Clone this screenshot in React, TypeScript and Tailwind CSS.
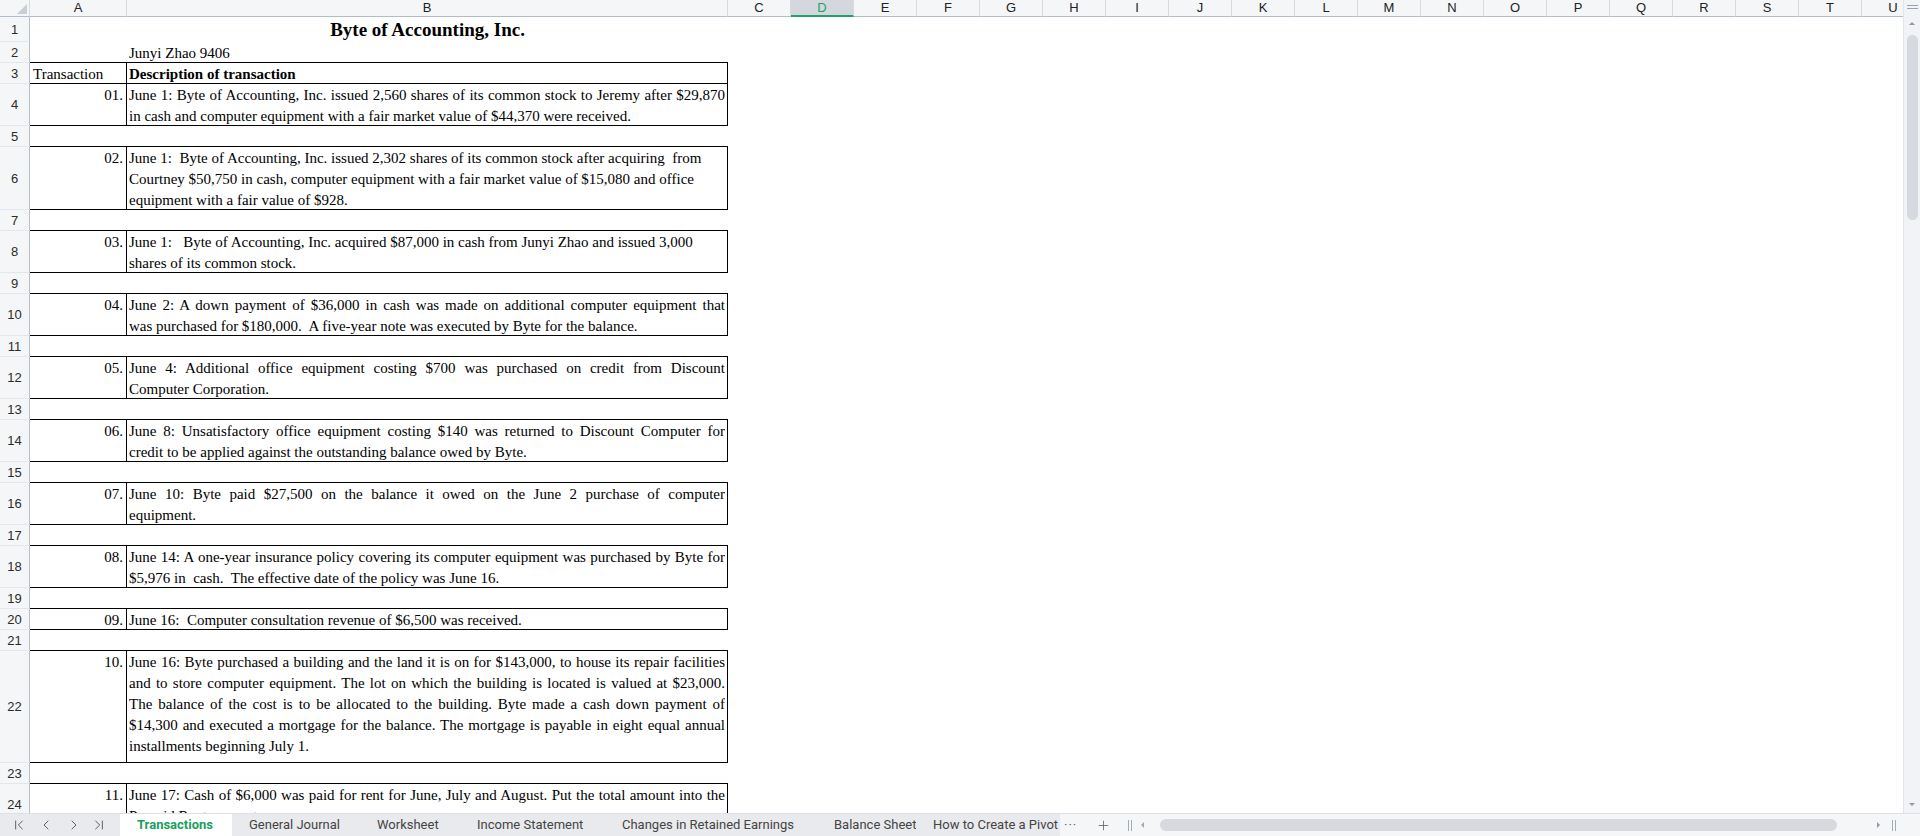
import { ChevronFirst, ChevronLeft, ChevronRight, ChevronLast, Plus } from 'lucide-react'

type DataRow = {
  n: number
  h: string
  num?: string
  lines?: string[]
  justify?: boolean
}

const COLS = ['C', 'D', 'E', 'F', 'G', 'H', 'I', 'J', 'K', 'L', 'M', 'N', 'O', 'P', 'Q', 'R', 'S', 'T', 'U']

const rows: DataRow[] = [
  {
    n: 4,
    h: 'h-[42px]',
    num: '01.',
    justify: true,
    lines: [
      'June 1:  Byte of Accounting, Inc. issued 2,560 shares of its common stock to Jeremy after $29,870',
      'in cash and computer equipment with a fair market value of $44,370 were received.',
    ],
  },
  { n: 5, h: 'h-[21px]' },
  {
    n: 6,
    h: 'h-[63px]',
    num: '02.',
    lines: [
      'June 1:  Byte of Accounting, Inc. issued 2,302 shares of its common stock after acquiring  from',
      'Courtney $50,750 in cash, computer equipment with a fair market value of $15,080 and office',
      'equipment with a fair value of $928.',
    ],
  },
  { n: 7, h: 'h-[21px]' },
  {
    n: 8,
    h: 'h-[42px]',
    num: '03.',
    lines: [
      'June 1:   Byte of Accounting, Inc. acquired $87,000 in cash from Junyi Zhao and issued 3,000',
      'shares of its common stock.',
    ],
  },
  { n: 9, h: 'h-[21px]' },
  {
    n: 10,
    h: 'h-[42px]',
    num: '04.',
    justify: true,
    lines: [
      'June 2:  A down payment of $36,000 in cash was made on additional computer equipment that',
      'was purchased for $180,000.  A five-year note was executed by Byte for the balance.',
    ],
  },
  { n: 11, h: 'h-[21px]' },
  {
    n: 12,
    h: 'h-[42px]',
    num: '05.',
    justify: true,
    lines: [
      'June 4:  Additional office equipment costing $700 was purchased on credit from Discount',
      'Computer Corporation.',
    ],
  },
  { n: 13, h: 'h-[21px]' },
  {
    n: 14,
    h: 'h-[42px]',
    num: '06.',
    justify: true,
    lines: [
      'June 8:  Unsatisfactory office equipment costing $140  was returned to Discount Computer for',
      'credit to be applied against the outstanding balance owed by Byte.',
    ],
  },
  { n: 15, h: 'h-[21px]' },
  {
    n: 16,
    h: 'h-[42px]',
    num: '07.',
    justify: true,
    lines: [
      'June 10:  Byte paid $27,500 on the balance it owed on the June 2 purchase of computer',
      'equipment.',
    ],
  },
  { n: 17, h: 'h-[21px]' },
  {
    n: 18,
    h: 'h-[42px]',
    num: '08.',
    justify: true,
    lines: [
      'June 14: A one-year insurance policy covering its computer equipment was purchased by Byte for',
      '$5,976 in  cash.  The effective date of the policy was June 16.',
    ],
  },
  { n: 19, h: 'h-[21px]' },
  {
    n: 20,
    h: 'h-[21px]',
    num: '09.',
    lines: ['June 16:  Computer consultation revenue of $6,500 was received.'],
  },
  { n: 21, h: 'h-[21px]' },
  {
    n: 22,
    h: 'h-[112px]',
    num: '10.',
    justify: true,
    lines: [
      'June 16:  Byte purchased a building and the land it is on for $143,000, to house its repair facilities',
      'and to store computer equipment.  The lot on which the building is located is valued at $23,000.',
      'The balance of the cost is to be allocated to the building.  Byte made a cash down payment of',
      '$14,300  and executed a mortgage for the balance.  The mortgage is payable in eight equal annual',
      'installments beginning July 1.',
    ],
  },
  { n: 23, h: 'h-[21px]' },
  {
    n: 24,
    h: 'h-[42px]',
    num: '11.',
    justify: true,
    lines: [
      'June 17:  Cash of $6,000 was paid for rent for June, July and August.  Put the total amount into the',
      'Prepaid Rent account.',
    ],
  },
]

const tabs = [
  { label: 'Transactions', w: 'w-[112px]', active: true },
  { label: 'General Journal', w: 'w-[128px]' },
  { label: 'Worksheet', w: 'w-[100px]' },
  { label: 'Income Statement', w: 'w-[145px]' },
  { label: 'Changes in Retained Earnings', w: 'w-[212px]' },
  { label: 'Balance Sheet', w: 'w-[99px]' },
  { label: 'How to Create a Pivot', w: 'w-[143px]' },
]

function RowNum({ n, h }: { n: number | string; h: string }) {
  return (
    <div
      className={`${h} flex w-[30px] shrink-0 items-center justify-center border-r border-b border-r-[#b7bfcc] border-b-[#e3e6eb] bg-[#f5f6f8] font-['Liberation_Sans',Arial,sans-serif] text-[13px] text-[#2b2b2b]`}
    >
      {n}
    </div>
  )
}

function ColumnHeader() {
  return (
    <div className="flex h-[17px] text-[13px] leading-[16px] text-[#222]">
      <div className="relative w-[30px] shrink-0 border-r border-b border-r-[#d6dae1] border-b-[#b3bccb] bg-[#f5f6f8]">
        <svg className="absolute right-[2px] bottom-[2px]" width="10" height="10" viewBox="0 0 10 10">
          <path d="M10 0 L10 10 L0 10 Z" fill="#c9ced6" />
        </svg>
      </div>
      <div className="w-[97px] shrink-0 border-r border-b border-r-[#d6dae1] border-b-[#b3bccb] bg-[#f5f6f8] text-center">A</div>
      <div className="w-[601px] shrink-0 border-r border-b border-r-[#d6dae1] border-b-[#b3bccb] bg-[#f5f6f8] text-center">B</div>
      {COLS.map((c) =>
        c === 'D' ? (
          <div
            key={c}
            className="w-[63px] shrink-0 border-r border-b-2 border-r-[#d6dae1] border-b-[#21a366] bg-[#d4d7dd] text-center text-[#21a366]"
          >
            {c}
          </div>
        ) : (
          <div
            key={c}
            className="w-[63px] shrink-0 border-r border-b border-r-[#d6dae1] border-b-[#b3bccb] bg-[#f5f6f8] text-center"
          >
            {c}
          </div>
        ),
      )}
    </div>
  )
}

function Line({ text, justify }: { text: string; justify: boolean }) {
  if (justify) {
    return <div className="h-[21px] overflow-hidden text-justify [text-align-last:justify]">{text}</div>
  }
  return <div className="h-[21px] overflow-hidden whitespace-pre">{text}</div>
}

function SheetRow({ row }: { row: DataRow }) {
  const boxed = !!row.lines
  return (
    <div className="flex">
      <RowNum n={row.n} h={row.h} />
      <div
        className={`${row.h} w-[97px] shrink-0 border-b border-black pt-[1px] pr-[3px] text-right ${boxed ? 'border-r' : ''}`}
      >
        {row.num}
      </div>
      <div className={`${row.h} w-[601px] shrink-0 border-b border-black px-[2px] pt-[1px] ${boxed ? 'border-r' : ''}`}>
        {row.lines?.map((l, i) => (
          <Line key={i} text={l} justify={!!row.justify && i < row.lines!.length - 1} />
        ))}
      </div>
      <div className="flex-1" />
    </div>
  )
}

function VScroll() {
  return (
    <div className="flex w-[17px] shrink-0 flex-col items-center border-l border-[#e2e5ea] bg-[#f2f3f6]">
      <div className="mt-[5px] flex w-[11px] flex-col gap-[2px]">
        <div className="h-[1px] bg-[#98a1b1]" />
        <div className="h-[1px] bg-[#98a1b1]" />
      </div>
      <div className="mt-[13px] h-0 w-0 border-x-[3px] border-b-[3px] border-x-transparent border-b-[#8e98aa]" />
      <div className="mt-[10px] h-[185px] w-[11px] rounded-full bg-[#d6d9df]" />
      <div className="flex-1" />
      <div className="mb-[7px] h-0 w-0 border-x-[3px] border-t-[3px] border-x-transparent border-t-[#8e98aa]" />
    </div>
  )
}

function BottomBar() {
  return (
    <div className="flex h-[23px] shrink-0 border-t border-[#dde0e6] bg-[#f5f6f8] font-['Roboto','Liberation_Sans',sans-serif] text-[13px] text-[#444]">
      <div className="flex w-[1060px] shrink-0 bg-[#e9eaee]">
        <div className="flex w-[120px] shrink-0 items-center pl-[11px] text-[#4a4a4a]">
          <ChevronFirst size={16} strokeWidth={1.3} />
          <ChevronLeft size={16} strokeWidth={1.3} className="ml-[11px]" />
          <ChevronRight size={16} strokeWidth={1.3} className="ml-[12px]" />
          <ChevronLast size={16} strokeWidth={1.3} className="ml-[9px]" />
        </div>
        <div className="flex flex-1 overflow-hidden">
          {tabs.map((t) => (
            <div
              key={t.label}
              className={`${t.w} flex shrink-0 items-center overflow-hidden pl-[17px] whitespace-nowrap ${
                t.active ? 'bg-white font-bold text-[#17a05d]' : ''
              }`}
            >
              {t.label}
            </div>
          ))}
        </div>
      </div>
      <div className="flex flex-1 items-center">
        <span className="ml-[4px] text-[13px] tracking-[1px] text-[#666]">···</span>
        <Plus size={15} strokeWidth={1.2} className="ml-[19px] text-[#555]" />
        <div className="ml-[17px] flex gap-[2px]">
          <div className="h-[11px] w-[1px] bg-[#a3abb9]" />
          <div className="h-[11px] w-[1px] bg-[#a3abb9]" />
        </div>
        <div className="ml-[9px] h-0 w-0 border-y-[3px] border-r-[3px] border-y-transparent border-r-[#a3abb9]" />
        <div className="ml-[16px] h-[12px] w-[677px] rounded-full bg-[#d7d9df]" />
        <div className="flex-1" />
        <div className="h-0 w-0 border-y-[3px] border-l-[3px] border-y-transparent border-l-[#8e98aa]" />
        <div className="ml-[12px] mr-[24px] flex gap-[2px]">
          <div className="h-[11px] w-[1px] bg-[#a3abb9]" />
          <div className="h-[11px] w-[1px] bg-[#a3abb9]" />
        </div>
      </div>
    </div>
  )
}

export default function App() {
  return (
    <div className="flex h-[836px] w-[1920px] flex-col overflow-hidden bg-white font-['Liberation_Sans',Arial,sans-serif]">
      <div className="flex h-[813px] shrink-0">
        <div className="flex-1 overflow-hidden">
          <ColumnHeader />
          <div className="font-['Liberation_Serif','Times_New_Roman',serif] text-[15px] leading-[21px] text-black">
            {/* title */}
            <div className="flex">
              <RowNum n={1} h="h-[25px]" />
              <div className="h-[25px] w-[97px] shrink-0" />
              <div className="h-[25px] w-[601px] shrink-0 text-center text-[19px] leading-[25px] font-bold">
                Byte of Accounting, Inc.
              </div>
            </div>
            <div className="flex">
              <RowNum n={2} h="h-[21px]" />
              <div className="h-[21px] w-[97px] shrink-0 border-b border-black" />
              <div className="h-[21px] w-[601px] shrink-0 border-b border-black px-[2px] pt-[1px]">Junyi Zhao 9406</div>
            </div>
            <div className="flex">
              <RowNum n={3} h="h-[21px]" />
              <div className="h-[21px] w-[97px] shrink-0 border-r border-b border-black pl-[3px] pt-[1px]">Transaction</div>
              <div className="h-[21px] w-[601px] shrink-0 border-r border-b border-black px-[2px] pt-[1px] font-bold">
                Description of transaction
              </div>
            </div>
            {rows.map((r) => (
              <SheetRow key={r.n} row={r} />
            ))}
          </div>
        </div>
        <VScroll />
      </div>
      <BottomBar />
    </div>
  )
}
